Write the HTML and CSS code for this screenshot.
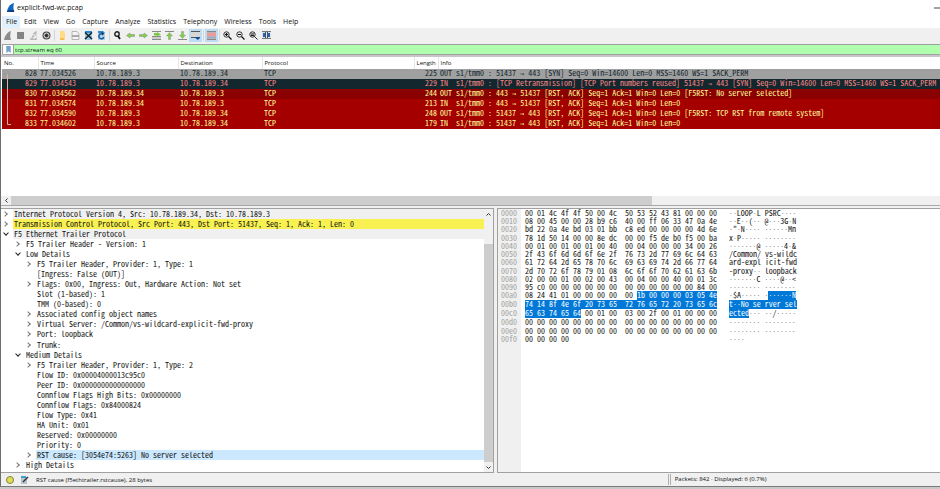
FILE: index.html
```html
<!DOCTYPE html>
<html lang="en">
<head>
  <meta charset="UTF-8">
  <title>explicit-fwd-wc.pcap</title>
  <link rel="stylesheet" href="styles.css">
</head>
<body>

<div class="window">
  <header class="titlebar">
    <svg class="fin" viewBox="0 0 10 10"><path d="M1 10C2 5 4 1 9 0C8 3 8 6 9 10Z" fill="#1467c0"/><path d="M1 10C2 8 5 7 9 8V10Z" fill="#0b3f86"/></svg>
    <h1>explicit-fwd-wc.pcap</h1>
    <button class="minimize" aria-label="Minimize"></button>
  </header>

  <nav class="menu">
    <button class="active">File</button>
    <button>Edit</button>
    <button>View</button>
    <button>Go</button>
    <button>Capture</button>
    <button>Analyze</button>
    <button>Statistics</button>
    <button>Telephony</button>
    <button>Wireless</button>
    <button>Tools</button>
    <button>Help</button>
  </nav>

  <div class="toolbar">
    <button aria-label="Start capture"><svg viewBox="0 0 9 9"><path d="M1 9C2 5 4 1 8 0C7 3 7 6 8 9Z" fill="#8c8c8c"/></svg></button>
    <button aria-label="Stop capture"><svg viewBox="0 0 9 9"><path d="M1 1H8V8H1Z" fill="#858585"/></svg></button>
    <button aria-label="Restart capture"><svg viewBox="0 0 9 9"><path d="M1 9C2 5 4 1 8 0C7 3 7 6 8 9Z" fill="#b8b8b8"/><path d="M3 7A2 2 0 1 1 6 7M6 5V7H4" fill="none" stroke="#fff"/></svg></button>
    <button aria-label="Capture options"><svg viewBox="0 0 9 9"><circle cx="4.500" cy="4.500" r="4" fill="#4a4a4a"/><circle cx="4.500" cy="4.500" r="2.500" fill="none" stroke="#ddd"/><circle cx="4.500" cy="4.500" r="1" fill="#222"/></svg></button>
    <i class="sep"></i>
    <button aria-label="Open"><svg viewBox="0 0 9 9"><path d="M2 0H6L7 2V9H2Z" fill="#ffdc84"/><path d="M2 7H6V9H2Z" fill="#f2bf4c"/></svg></button>
    <button aria-label="Save"><svg viewBox="0 0 9 9"><path d="M1 .5H6L8 3V8.500H1Z" fill="#f5f5f5" stroke="#b5b5b5"/><path d="M1 4H8V6H1Z" fill="#aaa"/></svg></button>
    <button aria-label="Close file"><svg viewBox="0 0 9 9"><path d="M1 0H8V9H1Z" fill="#9cc4dc"/><path d="M1 0H8V2H1Z" fill="#2f86cb"/><path d="M1 1.500L8 8M8 1.500L1 8" stroke="#10202c" stroke-width="1.500"/></svg></button>
    <button aria-label="Reload"><svg viewBox="0 0 9 9"><path d="M1 0H6L8 2V9H1Z" fill="#b4d0e4"/><path d="M1 0H6L8 2H1Z" fill="#2f86cb"/><path d="M6.800 6A2.500 2.500 0 1 1 5 2.800" fill="none" stroke="#1158a4" stroke-width="1.500"/><path d="M4.500 1L7.500 2.800L5 4.500Z" fill="#0c3461"/></svg></button>
    <i class="sep"></i>
    <button aria-label="Find"><svg viewBox="0 0 9 9"><circle cx="4" cy="3" r="2.200" fill="#eee" stroke="#222" stroke-width="1.400"/><path d="M5 5L7 8" stroke="#111" stroke-width="1.800"/></svg></button>
    <button aria-label="Back"><svg viewBox="0 0 9 9"><path d="M.5 4.500L4 2V3.500H8.500V5.500H4V7Z" fill="#86d04b" stroke="#8a9a80" stroke-width=".6"/></svg></button>
    <button aria-label="Forward"><svg viewBox="0 0 9 9"><path d="M8.500 4.500L5 2V3.500H.5V5.500H5V7Z" fill="#86d04b" stroke="#8a9a80" stroke-width=".6"/></svg></button>
    <button aria-label="Go to packet"><svg viewBox="0 0 9 9"><path d="M0 .5H9M0 5.500H9M0 8.500H9" stroke="#8a8a8a"/><path d="M0 6H9V8H0Z" fill="#ccc"/><path d="M2 2H5V1L9 3.500L5 5.500V4.500H2Z" fill="#79c943"/></svg></button>
    <button aria-label="First packet"><svg viewBox="0 0 9 9"><path d="M0 .5H9" stroke="#888"/><path d="M4.500 1.500L7.500 5H5.500V8.500H3.500V5H1.500Z" fill="#80cf45" stroke="#8a9a80" stroke-width=".5"/></svg></button>
    <button aria-label="Last packet"><svg viewBox="0 0 9 9"><path d="M0 8.500H9" stroke="#888"/><path d="M4.500 7.500L7.500 4H5.500V.5H3.500V4H1.500Z" fill="#80cf45" stroke="#8a9a80" stroke-width=".5"/></svg></button>
    <button class="on" aria-label="Auto scroll"><svg viewBox="0 0 9 9"><path d="M0 .5H9M0 6.500H9" stroke="#555"/><path d="M0 1H9V6H0Z" fill="#d5d9d6"/><path d="M4.500 6H9V7L6.800 9L4.500 7Z" fill="#174c98"/></svg></button>
    <i class="sep"></i>
    <button class="on" aria-label="Colorize"><svg viewBox="0 0 9 9"><path d="M0 0H9V9H0Z" fill="#b8b4b8"/><path d="M0 2H9V5H0Z" fill="#f09a98"/><path d="M0 6H9V7H0Z" fill="#9aa8d0"/><path d="M0 .5H9M0 8.500H9" stroke="#888"/></svg></button>
    <i class="sep"></i>
    <button aria-label="Zoom in"><svg viewBox="0 0 9 9"><circle cx="3.500" cy="3.500" r="2.700" fill="#eee" stroke="#333"/><path d="M2 3.500H5M3.500 2V5M5.500 5.500L8.500 8.500" stroke="#111" stroke-width="1.200"/></svg></button>
    <button aria-label="Zoom out"><svg viewBox="0 0 9 9"><circle cx="3.500" cy="3.500" r="2.700" fill="#eee" stroke="#333"/><path d="M2 3.500H5M5.500 5.500L8.500 8.500" stroke="#111" stroke-width="1.200"/></svg></button>
    <button aria-label="Normal size"><svg viewBox="0 0 9 9"><circle cx="3.500" cy="3.500" r="2.700" fill="#ddd" stroke="#333"/><path d="M2 3H5M2 4.500H5M5.500 5.500L8.500 8.500" stroke="#222"/></svg></button>
    <button aria-label="Resize columns"><svg viewBox="0 0 9 9"><path d="M0 1H9V8H0Z" fill="#dce4ea"/><path d="M0 .5H9M0 7.500H9" stroke="#777"/><path d="M1 2H3V6H1ZM6 2H8V6H6Z" fill="#2c62aa"/><path d="M3.500 1V7M5.500 1V7" stroke="#456"/></svg></button>
  </div>

  <div class="filter">
    <svg class="bookmark" viewBox="0 0 5 8"><path d="M0 0H5V8L2.500 6L0 8Z" fill="#729fcf"/></svg>
    <input type="text" value="tcp.stream eq 60" aria-label="Display filter" spellcheck="false">
  </div>

  <div class="packets">
    <table>
      <colgroup><col class="c-no"><col class="c-time"><col class="c-addr"><col class="c-addr"><col class="c-proto"><col class="c-len"><col></colgroup>
      <thead>
        <tr><th>No.</th><th>Time</th><th>Source</th><th>Destination</th><th>Protocol</th><th>Length</th><th>Info</th></tr>
      </thead>
      <tbody>
        <tr class="syn"><td>828</td><td>77.034526</td><td>10.78.189.3</td><td>10.78.189.34</td><td>TCP</td><td>225</td><td>OUT s1/tmm0 : 51437 <b>→</b> 443 [SYN] Seq=0 Win=14600 Len=0 MSS=1460 WS=1 SACK_PERM</td></tr>
        <tr class="bad"><td>829</td><td>77.034543</td><td>10.78.189.3</td><td>10.78.189.34</td><td>TCP</td><td>229</td><td>IN  s1/tmm0 : [TCP Retransmission] [TCP Port numbers reused] 51437 <b>→</b> 443 [SYN] Seq=0 Win=14600 Len=0 MSS=1460 WS=1 SACK_PERM</td></tr>
        <tr class="rst current"><td>830</td><td>77.034562</td><td>10.78.189.34</td><td>10.78.189.3</td><td>TCP</td><td>244</td><td>OUT s1/tmm0 : 443 <b>→</b> 51437 [RST, ACK] Seq=1 Ack=1 Win=0 Len=0 [F5RST: No server selected]</td></tr>
        <tr class="rst"><td>831</td><td>77.034574</td><td>10.78.189.34</td><td>10.78.189.3</td><td>TCP</td><td>213</td><td>IN  s1/tmm0 : 443 <b>→</b> 51437 [RST, ACK] Seq=1 Ack=1 Win=0 Len=0</td></tr>
        <tr class="rst"><td>832</td><td>77.034590</td><td>10.78.189.3</td><td>10.78.189.34</td><td>TCP</td><td>248</td><td>OUT s1/tmm0 : 51437 <b>→</b> 443 [RST, ACK] Seq=1 Ack=1 Win=0 Len=0 [F5RST: TCP RST from remote system]</td></tr>
        <tr class="rst"><td>833</td><td>77.034602</td><td>10.78.189.3</td><td>10.78.189.34</td><td>TCP</td><td>179</td><td>IN  s1/tmm0 : 51437 <b>→</b> 443 [RST, ACK] Seq=1 Ack=1 Win=0 Len=0</td></tr>
      </tbody>
    </table>
    <svg class="stream" viewBox="0 0 8 60"><path d="M1 5H7" stroke="#8b979c"/><path d="M4.500 5V55.500H9" fill="none" stroke="#e0b0a0"/></svg>
  </div>
  <div class="hscroll">
    <button aria-label="Scroll left"><svg viewBox="0 0 5 5"><path d="M3.500 .5L1.500 2.500L3.500 4.500" fill="none" stroke="#333"/></svg></button>
    <div class="track"><div class="thumb"></div></div>
  </div>

  <main class="panes">
    <section class="details">
      <ul class="tree">
        <li class="closed root"><span>Internet Protocol Version 4, Src: 10.78.189.34, Dst: 10.78.189.3</span></li>
        <li class="closed root yellow"><span>Transmission Control Protocol, Src Port: 443, Dst Port: 51437, Seq: 1, Ack: 1, Len: 0</span></li>
        <li class="open root"><span>F5 Ethernet Trailer Protocol</span></li>
        <li class="closed l1"><span>F5 Trailer Header - Version: 1</span></li>
        <li class="open l1"><span>Low Details</span></li>
        <li class="closed l2"><span>F5 Trailer Header, Provider: 1, Type: 1</span></li>
        <li class="l2"><span>[Ingress: False (OUT)]</span></li>
        <li class="closed l2"><span>Flags: 0x00, Ingress: Out, Hardware Action: Not set</span></li>
        <li class="l2"><span>Slot (1-based): 1</span></li>
        <li class="l2"><span>TMM (0-based): 0</span></li>
        <li class="closed l2"><span>Associated config object names</span></li>
        <li class="closed l2"><span>Virtual Server: /Common/vs-wildcard-explicit-fwd-proxy</span></li>
        <li class="closed l2"><span>Port: loopback</span></li>
        <li class="closed l2"><span>Trunk:</span></li>
        <li class="open l1"><span>Medium Details</span></li>
        <li class="closed l2"><span>F5 Trailer Header, Provider: 1, Type: 2</span></li>
        <li class="l2"><span>Flow ID: 0x00004000013c95c0</span></li>
        <li class="l2"><span>Peer ID: 0x0000000000000000</span></li>
        <li class="l2"><span>Connflow Flags High Bits: 0x00000000</span></li>
        <li class="l2"><span>Connflow Flags: 0x84000824</span></li>
        <li class="l2"><span>Flow Type: 0x41</span></li>
        <li class="l2"><span>HA Unit: 0x01</span></li>
        <li class="l2"><span>Reserved: 0x00000000</span></li>
        <li class="l2"><span>Priority: 0</span></li>
        <li class="closed l2 selected"><span>RST cause: [3054e74:5263] No server selected</span></li>
        <li class="closed l1"><span>High Details</span></li>
      </ul>
      <div class="vscroll">
        <button aria-label="Scroll up"><svg viewBox="0 0 5 5"><path d="M.5 3.500L2.500 1.500L4.500 3.500" fill="none" stroke="#333"/></svg></button>
        <div class="thumb"></div>
        <button aria-label="Scroll down"><svg viewBox="0 0 5 5"><path d="M.5 1.500L2.500 3.500L4.500 1.500" fill="none" stroke="#333"/></svg></button>
      </div>
    </section>
    <section class="bytes">
      <div class="dump" id="dump"></div>
    </section>
  </main>

  <footer class="status">
    <div class="field">
      <svg class="expert" viewBox="0 0 8 8"><circle cx="4" cy="4" r="3.500" fill="#e0dc58" stroke="#85853c"/></svg>
      <svg class="comment" viewBox="0 0 8 8"><path d="M0 1H6V8H0Z" fill="#b8c4cc"/><path d="M0 1H5" stroke="#3c9fd0" stroke-width="2"/><path d="M2 6L7 1" stroke="#333" stroke-width="1.500"/></svg>
      <span>RST cause (f5ethtrailer.rstcause), 28 bytes</span>
    </div>
    <div class="counts">Packets: 842 · Displayed: 6 (0.7%)</div>
  </footer>
</div>
<div class="behind"></div>

<script>
  const dump = document.getElementById("dump");
  const SEL_START = 0xa9;
  const SEL_END = 0xc5; // exclusive

  const hex = [
    "00 01 4c 4f 4f 50 00 4c 50 53 52 43 81 00 00 00",
    "08 00 45 00 00 28 b9 c6 40 00 ff 06 33 47 0a 4e",
    "bd 22 0a 4e bd 03 01 bb c8 ed 00 00 00 00 4d 6e",
    "78 1d 50 14 00 00 8e dc 00 00 f5 de b0 f5 00 ba",
    "00 01 00 01 00 01 00 40 00 04 00 00 00 34 00 26",
    "2f 43 6f 6d 6d 6f 6e 2f 76 73 2d 77 69 6c 64 63",
    "61 72 64 2d 65 78 70 6c 69 63 69 74 2d 66 77 64",
    "2d 70 72 6f 78 79 01 08 6c 6f 6f 70 62 61 63 6b",
    "02 00 00 01 00 02 00 43 00 04 00 00 40 00 01 3c",
    "95 c0 00 00 00 00 00 00 00 00 00 00 00 00 84 00",
    "08 24 41 01 00 00 00 00 00 1b 00 00 00 03 05 4e",
    "74 14 8f 4e 6f 20 73 65 72 76 65 72 20 73 65 6c",
    "65 63 74 65 64 00 01 00 03 00 2f 00 01 00 00 00",
    "00 00 00 00 00 00 00 00 00 00 00 00 00 00 00 00",
    "00 00 00 00 00 00 00 00 00 00 00 00 00 00 00 00",
    "00 00 00 00"
  ];

  function span(cls, text) {
    const el = document.createElement("span");
    el.className = cls;
    // unprintable bytes are dimmed
    text.split(/(·+)/).forEach((part) => {
      if (part.startsWith("·")) {
        const dots = document.createElement("i");
        dots.textContent = part;
        el.appendChild(dots);
      } else if (part) {
        el.append(part);
      }
    });
    return el;
  }

  function toChar(byte) {
    const n = parseInt(byte, 16);
    return n >= 0x20 && n < 0x7f ? String.fromCharCode(n) : "·";
  }

  // joins cells into runs, with the selected run in its own span
  function fill(parent, cells, gap, base) {
    let run = "";
    let selected = false;
    const flush = () => {
      if (run) parent.appendChild(span(selected ? "sel" : "plain", run));
      run = "";
    };
    cells.forEach((cell, i) => {
      const on = base + i >= SEL_START && base + i < SEL_END;
      const space = i === 0 ? "" : (i === 8 ? gap + " " : gap);
      if (on && !selected) {
        run += space;
        flush();
        selected = true;
        run += cell;
      } else if (!on && selected) {
        flush();
        selected = false;
        run += space + cell;
      } else {
        run += space + cell;
      }
    });
    flush();
  }

  hex.forEach((line, row) => {
    const bytes = line.split(" ");
    const base = row * 16;
    const offset = span("offset", base.toString(16).padStart(4, "0"));
    const data = span("data", "");
    const ascii = span("ascii", "");
    fill(data, bytes, " ", base);
    fill(ascii, bytes.map(toChar), "", base);
    dump.append(offset, data, ascii);
  });
</script>

</body>
</html>
```
FILE: styles.css
```css
*, *::before {
  box-sizing: border-box;
}
html, body {
  height: 100%;
}
body {
  margin: 0;
  display: flex;
  flex-direction: column;
  background-color: #fff;
  color: #111;
  font-family: "Open Sans", "Noto Sans", sans-serif;
  font-size: 6px;
  overflow: hidden;
}
button {
  margin: 0;
  padding: 0;
  border: none;
  background: none;
  color: inherit;
  font: inherit;
}
svg {
  display: block;
}
.window {
  flex: 1;
  min-height: 0;
  display: flex;
  flex-direction: column;
  border-left: 1px solid #6e6e6e;
  border-bottom: 1px solid #7a7a7a;
  background-color: #f0f0f0;
}

/* title and menu */
.titlebar {
  height: 15px;
  display: flex;
  align-items: center;
  gap: 2px;
  padding-left: 5px;
  background-color: #fff;
}
.fin {
  width: 9px;
  height: 9px;
}
.titlebar h1 {
  margin: 0;
  font-size: 7px;
  font-weight: normal;
}
.minimize {
  width: 6px;
  height: 2px;
  margin-left: auto;
  background-color: #a0a0a0;
}
.menu {
  height: 13px;
  display: flex;
  align-items: center;
  padding-left: 1px;
  background-color: #fff;
}
.menu button {
  height: 12px;
  padding: 0 3px 0 4px;
  font-size: 7px;
  line-height: 12px;
}
.menu .active {
  background-color: #e0f0fc;
}

/* toolbar */
.toolbar {
  height: 15px;
  display: flex;
  align-items: center;
}
.toolbar button {
  width: 13px;
  height: 13px;
  display: flex;
  align-items: center;
  justify-content: center;
}
.toolbar svg {
  width: 9px;
  height: 9px;
}
.toolbar .on {
  background-color: #bcdcf4;
}
.sep {
  width: 1px;
  height: 11px;
  margin: 0 1px;
  background-color: #d4d4d4;
}

/* display filter */
.filter {
  height: 11px;
  display: flex;
  margin: 1px 0 0 1px;
  border: 1px solid #a0a0a0;
  border-right: none;
  background-color: #fff;
}
.bookmark {
  width: 5px;
  height: 7px;
  margin: 1px 2px 0 3px;
}
.filter input {
  flex: 1;
  padding: 0 1px;
  border: none;
  border-left: 1px solid #a0a0a0;
  background-color: #afffaf;
  color: #111;
  font: inherit;
}

/* packet list */
.packets {
  position: relative;
  flex: 1;
  min-height: 0;
  overflow: hidden;
  border-top: 2px solid #c8c6ca;
  padding-left: 1px;
  background-color: #fff;
}
.packets table {
  width: 100%;
  table-layout: fixed;
  border-collapse: collapse;
}
.c-no { width: 36px; }
.c-time { width: 56px; }
.c-addr { width: 84px; }
.c-proto { width: 152px; }
.c-len { width: 24px; }
.packets th {
  height: 12px;
  padding: 0 0 0 2px;
  border-right: 1px solid #e5e5e5;
  font-weight: normal;
  text-align: left;
  line-height: 11px;
}
.packets th:last-child {
  border-right: none;
}
.packets td {
  height: 10px;
  padding: 0 0 0 2px;
  line-height: 8px;
  vertical-align: top;
  white-space: pre;
}
.packets td, .tree, .dump {
  font-family: "Noto Sans Mono CJK JP", "DejaVu Sans Mono", monospace;
  font-size: 8px;
}
.packets td b {
  font-family: "DejaVu Sans Mono", monospace;
  font-size: 7px;
  font-weight: normal;
  line-height: 1;
}
.packets td:nth-child(1),
.packets td:nth-child(6) {
  padding: 0 1px 0 0;
  text-align: right;
}
.syn {
  background-color: #a0a0a0;
  color: #12272e;
}
.bad {
  background-color: #12272e;
  color: #f78787;
}
.rst {
  background-color: #a40000;
  color: #fffc9c;
}
.rst.current {
  background-color: #8b0000;
}
.stream {
  position: absolute;
  left: 2px;
  top: 12px;
  width: 8px;
  height: 60px;
}
.hscroll {
  height: 10px;
  display: flex;
  border-bottom: 1px solid #a8a8a8;
}
.hscroll button {
  width: 10px;
  display: flex;
  align-items: center;
  justify-content: center;
}
.hscroll svg, .vscroll svg {
  width: 5px;
  height: 5px;
}
.track {
  flex: 1;
}
.hscroll .thumb {
  width: 69%;
  height: 100%;
  background-color: #cdcdcd;
}

/* details and bytes */
.panes {
  height: 265px;
  display: flex;
  gap: 3px;
  margin-top: 2px;
}
.details {
  flex: 493 1 0;
  min-width: 0;
  display: flex;
  border: 1px solid #a0a0a0;
  border-left: none;
  background-color: #fff;
}
.tree {
  flex: 1;
  min-width: 0;
  display: grid;
  grid-auto-rows: 1fr;
  margin: 0;
  padding: 0 0 2px;
  list-style: none;
}
.tree li {
  display: flex;
  padding-left: 12px;
}
.tree .l1 {
  padding-left: 24px;
}
.tree .l2 {
  padding-left: 35px;
}
.tree span {
  flex: 1;
  padding-left: 1px;
  line-height: 10px;
  white-space: pre;
}
.root span {
  background-color: #f0f0f0;
}
.yellow span {
  background-color: #f9f152;
}
.selected span {
  background-color: #cce8ff;
}
.closed::before, .open::before {
  content: "";
  width: 4px;
  height: 4px;
  margin: 3px 6px 0 -10px;
  border: solid #777;
  border-width: 1px 1px 0 0;
  transform: rotate(45deg);
}
.open::before {
  margin: 2px 5px 0 -9px;
  border-color: #222;
  transform: rotate(135deg);
}
.vscroll {
  width: 9px;
  display: flex;
  flex-direction: column;
  background-color: #f0f0f0;
}
.vscroll button {
  height: 10px;
  display: flex;
  align-items: center;
  justify-content: center;
}
.vscroll .thumb {
  flex: 1;
  margin-top: 25px;
  background-color: #cdcdcd;
}
.bytes {
  flex: 443 1 0;
  min-width: 0;
  border: 1px solid #a0a0a0;
  border-right: none;
  background: linear-gradient(to right, #f0f0f0 23px, #fff 23px);
}
.dump {
  height: 134px;
  display: grid;
  grid-template-columns: 16px 196px 1fr;
  grid-auto-rows: 1fr;
  column-gap: 8px;
  padding-left: 3px;
  line-height: 8px;
  white-space: pre;
}
.offset {
  color: #a0a0a0;
}
.ascii i {
  color: #777;
  font-size: 7px;
  font-style: normal;
  line-height: 1;
}
.sel {
  display: inline-block;
  height: 9px;
  vertical-align: top;
  background-color: #0078d7;
  color: #fff;
}
.ascii .sel i {
  color: #fff;
}

/* status bar */
.status {
  height: 13px;
  display: flex;
  align-items: center;
}
.field {
  flex: 671 1 0;
  display: flex;
  align-items: center;
  gap: 7px;
  padding-left: 5px;
}
.expert, .comment {
  width: 8px;
  height: 8px;
}
.counts {
  flex: 269 1 0;
  padding-left: 4px;
  border-left: 3px double #b0b0b0;
  line-height: 11px;
}
.behind {
  height: 2px;
  background-color: #c8c8c8;
}
```
